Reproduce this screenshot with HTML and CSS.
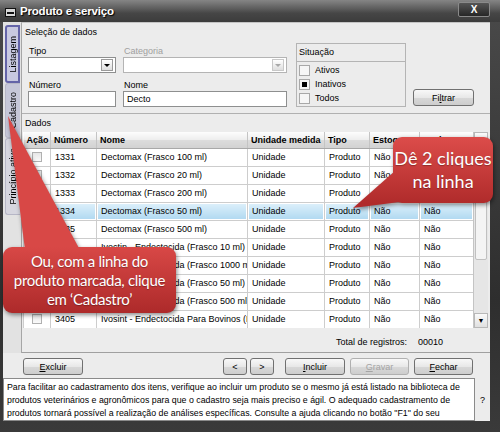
FILE: index.html
```html
<!DOCTYPE html>
<html lang="pt-BR">

<head>
    <meta charset="UTF-8">
    <title>Produto e serviço</title>
    <link rel="stylesheet" href="styles.css">
</head>

<body>
    <div class="window">
        <!-- Barra de título -->
        <div class="titlebar">
            <span class="sysicon"><i></i></span>
            <span class="title">Produto e serviço</span>
            <span class="close">X</span>
        </div>

        <div class="client">
            <div class="top">
                <!-- Abas verticais -->
                <div class="tabs">
                    <div class="tab active"><span>Listagem</span></div>
                    <div class="tab"><span>Cadastro</span></div>
                    <div class="tab last"><span>Princípio ativo</span></div>
                </div>

                <div class="main">
                    <!-- Seleção de dados -->
                    <div class="sel">
                        <div class="caption">Seleção de dados</div>
                        <div class="sel-body">
                            <div class="fields">
                                <div class="field">
                                    <label>Tipo</label>
                                    <div class="combo"><span class="arrow"></span></div>
                                </div>
                                <div class="field">
                                    <label class="disabled">Categoria</label>
                                    <div class="combo disabled"><span class="arrow"></span></div>
                                </div>
                                <div class="field">
                                    <label>Número</label>
                                    <div class="input"></div>
                                </div>
                                <div class="field">
                                    <label>Nome</label>
                                    <div class="input">Decto</div>
                                </div>
                            </div>

                            <div class="situacao">
                                <div class="sit-head">Situação</div>
                                <div class="opt"><span class="chk"></span>Ativos</div>
                                <div class="opt"><span class="chk checked"></span>Inativos</div>
                                <div class="opt"><span class="chk"></span>Todos</div>
                            </div>

                            <button class="btn btn-filtrar">Fi<u>l</u>trar</button>
                        </div>
                    </div>

                    <!-- Dados -->
                    <div class="dados">
                        <div class="caption">Dados</div>
                        <div class="grid-wrap">
                            <div class="grid-box">
                                <table class="grid">
                                    <colgroup>
                                        <col style="width: 27px">
                                        <col style="width: 46px">
                                        <col style="width: 151px">
                                        <col style="width: 77px">
                                        <col style="width: 45px">
                                        <col style="width: 50px">
                                        <col style="width: 54px">
                                    </colgroup>
                                    <tr>
                                        <th>Ação</th>
                                        <th>Número</th>
                                        <th>Nome</th>
                                        <th>Unidade medida</th>
                                        <th>Tipo</th>
                                        <th>Estoque</th>
                                        <th>Inativo</th>
                                    </tr>
                                    <tr>
                                        <td class="acao"><span class="cb"></span></td>
                                        <td>1331</td>
                                        <td>Dectomax (Frasco 100 ml)</td>
                                        <td>Unidade</td>
                                        <td>Produto</td>
                                        <td>Não</td>
                                        <td>Não</td>
                                    </tr>
                                    <tr>
                                        <td class="acao"><span class="cb"></span></td>
                                        <td>1332</td>
                                        <td>Dectomax (Frasco 20 ml)</td>
                                        <td>Unidade</td>
                                        <td>Produto</td>
                                        <td>Não</td>
                                        <td>Não</td>
                                    </tr>
                                    <tr>
                                        <td class="acao"><span class="cb"></span></td>
                                        <td>1333</td>
                                        <td>Dectomax (Frasco 200 ml)</td>
                                        <td>Unidade</td>
                                        <td>Produto</td>
                                        <td>Não</td>
                                        <td>Não</td>
                                    </tr>
                                    <tr class="selected">
                                        <td class="acao"><span class="cb"></span></td>
                                        <td>1334</td>
                                        <td>Dectomax (Frasco 50 ml)</td>
                                        <td>Unidade</td>
                                        <td>Produto</td>
                                        <td>Não</td>
                                        <td>Não</td>
                                    </tr>
                                    <tr>
                                        <td class="acao"><span class="cb"></span></td>
                                        <td>1335</td>
                                        <td>Dectomax (Frasco 500 ml)</td>
                                        <td>Unidade</td>
                                        <td>Produto</td>
                                        <td>Não</td>
                                        <td>Não</td>
                                    </tr>
                                    <tr>
                                        <td class="acao"><span class="cb"></span></td>
                                        <td>3401</td>
                                        <td>Ivectin - Endectocida (Frasco 10 ml)</td>
                                        <td>Unidade</td>
                                        <td>Produto</td>
                                        <td>Não</td>
                                        <td>Não</td>
                                    </tr>
                                    <tr>
                                        <td class="acao"><span class="cb"></span></td>
                                        <td>3402</td>
                                        <td>Ivectin - Endectocida (Frasco 1000 ml)</td>
                                        <td>Unidade</td>
                                        <td>Produto</td>
                                        <td>Não</td>
                                        <td>Não</td>
                                    </tr>
                                    <tr>
                                        <td class="acao"><span class="cb"></span></td>
                                        <td>3403</td>
                                        <td>Ivectin - Endectocida (Frasco 50 ml)</td>
                                        <td>Unidade</td>
                                        <td>Produto</td>
                                        <td>Não</td>
                                        <td>Não</td>
                                    </tr>
                                    <tr>
                                        <td class="acao"><span class="cb"></span></td>
                                        <td>3404</td>
                                        <td>Ivectin - Endectocida (Frasco 500 ml)</td>
                                        <td>Unidade</td>
                                        <td>Produto</td>
                                        <td>Não</td>
                                        <td>Não</td>
                                    </tr>
                                    <tr>
                                        <td class="acao"><span class="cb"></span></td>
                                        <td>3405</td>
                                        <td>Ivosint - Endectocida Para Bovinos (Frasco 1 l)</td>
                                        <td>Unidade</td>
                                        <td>Produto</td>
                                        <td>Não</td>
                                        <td>Não</td>
                                    </tr>
                                </table>
                            </div>
                            <div class="vscroll">
                                <div class="sb-btn"></div>
                                <div class="sb-thumb"></div>
                                <div class="sb-track"></div>
                                <div class="sb-btn down">&#9660;</div>
                            </div>
                        </div>
                        <div class="total">
                            <span>Total de registros:</span>
                            <span>00010</span>
                        </div>
                    </div>
                </div>
            </div>

            <!-- Botões -->
            <div class="buttons">
                <button class="btn w60"><u>E</u>xcluir</button>
                <button class="btn nav prev">&lt;</button>
                <button class="btn nav">&gt;</button>
                <button class="btn w60 incluir"><u>I</u>ncluir</button>
                <button class="btn w59 gap5 disabled"><u>G</u>ravar</button>
                <button class="btn w59 gap5"><u>F</u>echar</button>
            </div>

            <!-- Texto de ajuda -->
            <div class="help">
                <div class="help-text">
                    Para facilitar ao cadastramento dos itens, verifique ao incluir um produto se o mesmo já está listado na biblioteca de<br>
                    produtos veterinários e agronômicos para que o cadastro seja mais preciso e ágil. O adequado cadastramento de<br>
                    produtos tornará possível a realização de análises específicas. Consulte a ajuda clicando no botão "F1" do seu
                </div>
                <div class="help-q">?</div>
            </div>
        </div>

        <!-- Balões de instrução -->
        <svg class="callouts" width="500" height="432" viewBox="0 0 500 432">
            <defs>
                <linearGradient id="red1" gradientUnits="userSpaceOnUse" x1="0" y1="137" x2="0" y2="203">
                    <stop offset="0" stop-color="#dc4c4a"/>
                    <stop offset="1" stop-color="#b02b2b"/>
                </linearGradient>
                <linearGradient id="red2" gradientUnits="userSpaceOnUse" x1="0" y1="247" x2="0" y2="313">
                    <stop offset="0" stop-color="#d84846"/>
                    <stop offset="1" stop-color="#ad2a2a"/>
                </linearGradient>
            </defs>
            <g class="balloon">
                <polygon points="396,170 415,200 353,208" fill="url(#red1)"/>
                <rect x="393" y="137" width="100" height="66" rx="9" fill="url(#red1)"/>
            </g>
            <g class="balloon">
                <polygon points="8,116 25,250 80,250" fill="url(#red2)"/>
                <rect x="3" y="247" width="173" height="66" rx="9" fill="url(#red2)"/>
            </g>
        </svg>
        <div class="balloon-text b1">Dê 2 cliques<br>na linha</div>
        <div class="balloon-text b2">Ou, com a linha do<br>produto marcada, clique<br>em ‘Cadastro’</div>
    </div>
</body>

</html>
```

FILE: styles.css
```css
* {
    box-sizing: border-box;
}

html,
body {
    margin: 0;
}

body {
    width: 500px;
    height: 432px;
    overflow: hidden;
    font-family: "Liberation Sans", Arial, sans-serif;
    font-size: 9px;
    color: #000;
    background: #333;
}

.window {
    position: relative;
    width: 500px;
    height: 432px;
    display: flex;
    flex-direction: column;
    padding: 0 10px 0 3px;
    background: linear-gradient(#4a4a4a, #2e2e2e 300px, #3a3a3a);
}

/* Barra de título */
.titlebar {
    height: 22px;
    flex: none;
    margin: 0 -10px 0 -3px;
    padding: 0 10px 0 5px;
    display: flex;
    align-items: center;
    background: linear-gradient(#858585, #5c5c5c 40%, #464646 60%, #3c3c3c);
}

.sysicon {
    width: 11px;
    height: 9px;
    margin-top: 3px;
    border: 1px solid #111;
    background: #d8d8d8;
    display: flex;
    align-items: center;
    justify-content: center;
}

.sysicon i {
    width: 7px;
    height: 2px;
    background: #111;
}

.title {
    margin-left: 4px;
    color: #fff;
    font-size: 11.5px;
    font-weight: bold;
    letter-spacing: -0.2px;
    text-shadow: 1px 1px 1px #000;
}

.close {
    margin-left: auto;
    width: 32px;
    height: 15px;
    margin-top: -4px;
    border: 1px solid #8a8a8a;
    border-radius: 2px;
    background: linear-gradient(#555, #262626);
    color: #fff;
    font-weight: bold;
    font-size: 10px;
    text-align: center;
    line-height: 13px;
}

/* Área cliente */
.client {
    height: 399px;
    flex: none;
    display: flex;
    flex-direction: column;
    overflow: hidden;
    background: #ececec;
}

.top {
    height: 331px;
    flex: none;
    display: flex;
}

.tabs {
    width: 18px;
    padding: 3px 1px 0 2px;
    display: flex;
    flex-direction: column;
    background: #e2e2e2;
}

.tab {
    height: 55px;
    display: flex;
    align-items: center;
    justify-content: center;
    border: 1px solid #b6b6c6;
    border-right: none;
    border-radius: 3px 0 0 3px;
    background: #c6c7d8;
}

.tab span {
    writing-mode: vertical-rl;
    transform: rotate(180deg);
    white-space: nowrap;
}

.tab.active {
    height: 58px;
    border: 2px solid #6464a8;
    background: #c8c9e0;
}

.tab.last {
    height: 77px;
    background: #d6d6df;
}

.main {
    flex: 1;
    display: flex;
    flex-direction: column;
    border-left: 1px solid #a6a6a6;
    border-top: 1px solid #c4c4c4;
}

.caption {
    height: 18px;
    line-height: 18px;
    padding-left: 3px;
}

/* Seleção de dados */
.sel {
    height: 90px;
    flex: none;
}

.sel-body {
    display: flex;
    align-items: flex-start;
    padding: 2px 0 0 6px;
}

.fields {
    display: grid;
    grid-template-columns: 88px 164px;
    column-gap: 7px;
    row-gap: 7px;
    margin-top: 3px;
}

.field label {
    display: block;
    height: 11px;
    line-height: 11px;
    padding-left: 1px;
}

.field label.disabled {
    color: #a0a0a0;
}

.combo,
.input {
    height: 16px;
    border: 1px solid #8e8f8f;
    background: #fff;
}

.combo {
    display: flex;
    align-items: center;
    justify-content: flex-end;
    padding-right: 2px;
}

.arrow {
    width: 12px;
    height: 12px;
    border: 1px solid #9a9a9a;
    background: linear-gradient(#fff, #dedede);
    display: flex;
    align-items: center;
    justify-content: center;
}

.arrow::after {
    content: "";
    border-left: 3px solid transparent;
    border-right: 3px solid transparent;
    border-top: 3px solid #000;
}

.combo.disabled {
    border-color: #b4b4b4;
}

.combo.disabled .arrow {
    border-color: #c8c8c8;
}

.combo.disabled .arrow::after {
    border-top-color: #a8a8a8;
}

.input {
    padding-left: 3px;
    line-height: 14px;
}

.situacao {
    width: 110px;
    height: 64px;
    margin-left: 9px;
    border: 1px solid #b4b4b4;
}

.sit-head {
    height: 18px;
    line-height: 17px;
    padding-left: 2px;
    border-bottom: 1px solid #b4b4b4;
    margin-bottom: 1px;
}

.opt {
    height: 14px;
    display: flex;
    align-items: center;
    gap: 5px;
    padding-left: 2px;
}

.chk {
    width: 11px;
    height: 11px;
    border: 1px solid #a8a8a8;
    background: #f6f6f6;
    display: flex;
    align-items: center;
    justify-content: center;
}

.chk.checked::after {
    content: "";
    width: 5px;
    height: 5px;
    background: #000;
}

.btn {
    height: 17px;
    padding: 0;
    font-family: inherit;
    font-size: 9px;
    color: #000;
    border: 1px solid #707070;
    border-radius: 3px;
    background: linear-gradient(#f8f8f8, #e8e8e8 50%, #d8d8d8 51%, #cdcdcd);
}

.btn u {
    text-decoration: underline;
}

.btn-filtrar {
    width: 61px;
    margin: 46px 0 0 7px;
}

/* Dados */
.dados {
    flex: 1;
    display: flex;
    flex-direction: column;
    border-top: 1px solid #b0b0b0;
    border-bottom: 1px solid #a0a0a0;
}

.grid-wrap {
    height: 196px;
    flex: none;
    margin: 0 2px 0 1px;
    display: flex;
    background: #fff;
}

.grid-box {
    width: 450px;
    overflow: hidden;
}

.grid {
    width: 450px;
    table-layout: fixed;
    border-collapse: collapse;
}

.grid th {
    height: 16px;
    padding: 0 3px;
    text-align: left;
    font-weight: bold;
    white-space: nowrap;
    overflow: hidden;
    border-right: 1px solid #c4c4c4;
    border-bottom: 1px solid #a8a8a8;
    background: linear-gradient(#fdfdfd, #ededed 50%, #dcdcdc 51%, #d2d2d2);
}

.grid td {
    height: 18px;
    padding: 0 4px;
    white-space: nowrap;
    overflow: hidden;
    border: 1px solid #cdcdcd;
    background: #fff;
}

.grid tr.selected td {
    background: linear-gradient(#dff1fb, #b0d9f1);
    box-shadow: inset 0 0 0 1px #fff;
}

.grid td.acao {
    padding: 0;
    text-align: center;
}

.cb {
    display: inline-block;
    width: 10px;
    height: 10px;
    vertical-align: middle;
    border: 1px solid #b0b0b0;
    background: linear-gradient(#e6e6e6, #fafafa);
}

.vscroll {
    width: 15px;
    display: flex;
    flex-direction: column;
    border-left: 1px solid #c4c4c4;
    background: #e6e6e6;
}

.sb-btn {
    height: 15px;
    border: 1px solid #b8b8b8;
    background: linear-gradient(#fafafa, #e0e0e0);
    font-size: 7px;
    text-align: center;
    line-height: 13px;
}

.sb-thumb {
    height: 113px;
    margin: 0 1px;
    border: 1px solid #c0c0c0;
    border-radius: 2px;
    background: #f4f4f4;
}

.sb-track {
    flex: 1;
}

.total {
    flex: 1;
    display: flex;
    justify-content: flex-end;
    align-items: center;
    gap: 11px;
    padding: 3px 47px 0 0;
}

/* Botões */
.buttons {
    height: 25px;
    flex: none;
    display: flex;
    align-items: center;
    padding: 2px 17px 0 20px;
}

.w60 {
    width: 60px;
}

.w59 {
    width: 59px;
}

.nav {
    width: 24px;
    margin-left: 3px;
}

.nav.prev {
    margin-left: auto;
}

.incluir {
    margin-left: 11px;
}

.gap5 {
    margin-left: 5px;
}

.btn.disabled {
    color: #a4a4a4;
    border-color: #b0b0b0;
}

/* Ajuda */
.help {
    height: 43px;
    flex: none;
    display: flex;
}

.help-text {
    flex: 1;
    padding: 2px 3px;
    font-size: 8.8px;
    line-height: 13px;
    white-space: nowrap;
    overflow: hidden;
    border: 1px solid #8a8a8a;
    background: #fff;
}

.help-q {
    width: 15px;
    display: flex;
    align-items: center;
    justify-content: center;
    background: #ececec;
}

/* Balões */
.callouts {
    position: absolute;
    left: 0;
    top: 0;
    pointer-events: none;
}

.balloon {
    filter: drop-shadow(1px 2px 2px rgba(0, 0, 0, 0.45));
}

.balloon-text {
    position: absolute;
    display: flex;
    align-items: center;
    justify-content: center;
    text-align: center;
    color: #fff;
    font-family: Lato, "Open Sans", sans-serif;
    white-space: nowrap;
    text-shadow: 0 1px 1px rgba(0, 0, 0, 0.3);
}

.b1 {
    left: 393px;
    top: 137px;
    width: 100px;
    height: 66px;
    font-size: 18px;
    line-height: 23px;
}

.b2 {
    left: 3px;
    top: 247px;
    width: 173px;
    height: 66px;
    font-size: 15px;
    line-height: 19px;
    letter-spacing: -0.3px;
}
```
